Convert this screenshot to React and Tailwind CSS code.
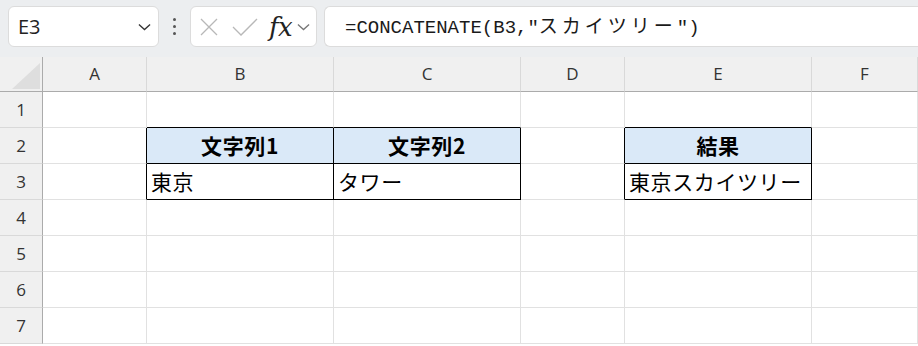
import React from "react";

const cols = [
  { id: "A", w: 104 },
  { id: "B", w: 187 },
  { id: "C", w: 187 },
  { id: "D", w: 104 },
  { id: "E", w: 187 },
  { id: "F", w: 106 },
];

const data = {
  B2: { v: "文字列1", head: true },
  C2: { v: "文字列2", head: true },
  E2: { v: "結果", head: true },
  B3: { v: "東京" },
  C3: { v: "タワー" },
  E3: { v: "東京スカイツリー" },
};

const inTable = (c, r) => !!data[c + r];
const next = (c) => {
  const i = cols.findIndex((x) => x.id === c);
  return cols[i + 1] ? cols[i + 1].id : null;
};

const jp = { fontFamily: '"Noto Sans CJK JP", "Noto Sans", sans-serif' };

const Chevron = ({ className }) => (
  <svg viewBox="0 0 14 8" className={className} fill="none" stroke="currentColor" strokeWidth="1.4">
    <path d="M1 1.2 L7 6.8 L13 1.2" />
  </svg>
);

const Toolbar = () => (
  <div className="flex items-center h-[57px] bg-[#eceef0] pl-[8px] pb-[4px]">
    <div className="flex items-center justify-between w-[151px] h-[41px] bg-white rounded-[6px] border border-[#dcdcdc] pl-[9px] pr-[7px]">
      <span className="text-[20px] text-[#222]" style={{ fontFamily: '"Open Sans", sans-serif' }}>E3</span>
      <Chevron className="w-[13px] h-[8px] text-[#333]" />
    </div>
    <div className="flex flex-col gap-[4px] w-[31px] items-center">
      <span className="w-[3px] h-[3px] bg-[#555] rounded-full" />
      <span className="w-[3px] h-[3px] bg-[#555] rounded-full" />
      <span className="w-[3px] h-[3px] bg-[#555] rounded-full" />
    </div>
    <div className="flex items-center w-[127px] h-[41px] bg-white rounded-[6px] border border-[#dcdcdc] pl-[9px]">
      <svg viewBox="0 0 18 18" className="w-[18px] h-[18px] text-[#b8b8b8]" fill="none" stroke="currentColor" strokeWidth="1.3">
        <path d="M1 1 L17 17 M17 1 L1 17" />
      </svg>
      <svg viewBox="0 0 26 18" className="w-[26px] h-[18px] ml-[14px] text-[#b8b8b8]" fill="none" stroke="currentColor" strokeWidth="1.3">
        <path d="M1 9 L9 17 L25 1" />
      </svg>
      <span className="ml-[11px] text-[26px] italic text-[#222] leading-none tracking-[-0.5px]" style={{ fontFamily: '"DejaVu Serif", "Liberation Serif", serif' }}>
        fx
      </span>
      <Chevron className="ml-[5px] w-[13px] h-[8px] text-[#777]" />
    </div>
    <div className="flex items-center flex-1 h-[41px] bg-white rounded-l-[6px] border border-r-0 border-[#dcdcdc] ml-[7px] pl-[20px]">
      <span className="text-[19px] text-[#1a1a1a] whitespace-nowrap" style={{ fontFamily: '"Liberation Mono", "Noto Sans CJK JP", monospace' }}>
        =CONCATENATE(B3,"<span className="tracking-[4px]" style={jp}>スカイツリー</span>")
      </span>
    </div>
  </div>
);

const Cell = ({ c, r }) => {
  const cell = data[c + r];
  const nx = next(c);
  const rightDark = inTable(c, r) || (nx && inTable(nx, r));
  const bottomDark = inTable(c, r) || inTable(c, r + 1);
  return (
    <div
      className={
        "flex items-center border-r border-b text-[21px] tracking-[0.6px] text-black overflow-hidden whitespace-nowrap " +
        (rightDark ? "border-r-black " : "border-r-[#e1e1e1] ") +
        (bottomDark ? "border-b-black " : "border-b-[#e1e1e1] ") +
        (cell && cell.head ? "bg-[#dae9f8] justify-center font-bold " : "bg-white pl-[4px] ")
      }
      style={jp}
    >
      {cell ? cell.v : ""}
    </div>
  );
};

export default function App() {
  const rows = [1, 2, 3, 4, 5, 6, 7];
  return (
    <div className="w-[918px] h-[346px] overflow-hidden bg-white">
      <Toolbar />
      <div
        className="grid"
        style={{ gridTemplateColumns: "43px 104px 187px 187px 104px 187px 106px", gridTemplateRows: "35px repeat(7, 36px)" }}
      >
        <div className="relative bg-[#f0f0f0] border-r border-b border-[#ababab]">
          <svg viewBox="0 0 28 26" className="absolute left-[12px] top-[6px] w-[28px] h-[26px]">
            <path d="M28 0 L28 26 L0 26 Z" fill="#dedede" />
          </svg>
        </div>
        {cols.map((col) => (
          <div
            key={col.id}
            className="flex items-center justify-center bg-[#f0f0f0] border-r border-r-[#d9d9d9] border-b border-b-[#ababab] text-[17px] text-[#333]"
            style={{ fontFamily: '"Open Sans", sans-serif' }}
          >
            {col.id}
          </div>
        ))}
        {rows.map((r) => (
          <React.Fragment key={r}>
            <div
              className="flex items-center justify-center bg-[#f0f0f0] border-r border-r-[#ababab] border-b border-b-[#d9d9d9] text-[17px] text-[#333]"
              style={{ fontFamily: '"Open Sans", sans-serif' }}
            >
              {r}
            </div>
            {cols.map((col) => (
              <Cell key={col.id} c={col.id} r={r} />
            ))}
          </React.Fragment>
        ))}
      </div>
    </div>
  );
}
